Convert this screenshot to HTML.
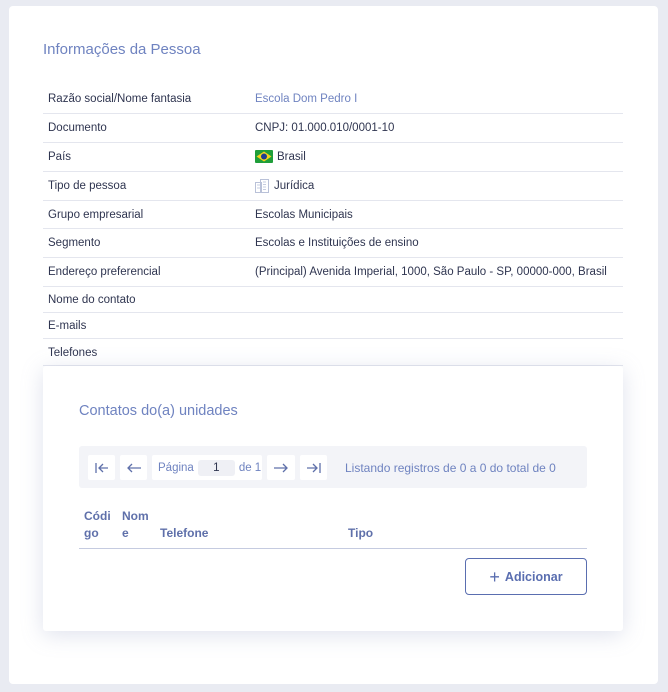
<!DOCTYPE html>
<html><head><meta charset="utf-8"><style>
*{margin:0;padding:0;box-sizing:border-box}
body{width:668px;height:692px;background:#e9ebf2;font-family:"Liberation Sans",sans-serif;position:relative;overflow:hidden}
.outer{position:absolute;left:9px;top:6px;width:649px;height:678px;background:#fff;border-radius:4px}
.title{position:absolute;left:43px;top:41px;font-size:15px;color:#6f83c0}
.row{position:absolute;left:43px;width:580px;border-bottom:1px solid #e4e6ee;font-size:11.5px;color:#2f3550}
.row .l{position:absolute;left:5px;top:3px}
.row .v{position:absolute;left:212px;top:3px;display:flex;align-items:center;gap:4px}
.inner{position:absolute;left:43px;top:366px;width:580px;height:265px;background:#fff;border-radius:3px;box-shadow:0 4px 22px rgba(140,150,190,.28)}
.it{position:absolute;left:36px;top:37px;font-size:14.5px;color:#6f83c0}
.pager{position:absolute;left:36px;top:80px;width:508px;height:42px;background:#f3f4f8;border-radius:3px}
.b{position:absolute;top:9px;height:25px;background:#fff;border-radius:2px;display:flex;align-items:center;justify-content:center}
.hd{position:absolute;top:142px;font-size:12px;font-weight:bold;color:#5f70aa;line-height:17px}
.add{position:absolute;left:422px;top:192px;width:122px;height:37px;border:1px solid #5a6eb0;border-radius:4px;color:#5a6eb0;font-weight:bold;font-size:12.5px;display:flex;align-items:center;justify-content:center}
</style></head><body>
<div class="outer"></div>
<div class="title">Informações da Pessoa</div>

<div class="row" style="top:90px;height:24px"><span class="l">Razão social/Nome fantasia</span><span class="v" style="color:#6f83c0">Escola Dom Pedro I</span></div>
<div class="row" style="top:119px;height:24px"><span class="l">Documento</span><span class="v">CNPJ: 01.000.010/0001-10</span></div>
<div class="row" style="top:148px;height:24px"><span class="l">País</span><span class="v" style="top:2px"><svg width="18" height="13"><rect width="18" height="13" rx="1" fill="#1f9e3a"/><polygon points="9,1.5 16.5,6.5 9,11.5 1.5,6.5" fill="#f5d21c"/><circle cx="9" cy="6.5" r="3" fill="#1f3f8f"/></svg>Brasil</span></div>
<div class="row" style="top:177px;height:24px"><span class="l">Tipo de pessoa</span><span class="v" style="top:2px"><svg width="15" height="14"><rect x="0.5" y="3.5" width="6" height="10" fill="none" stroke="#b9c1d8"/><rect x="5.5" y="0.5" width="8" height="13" fill="none" stroke="#b9c1d8"/><path d="M8 3h3M8 5.5h3M8 8h3M8 10.5h3M2 6h3M2 9h3" stroke="#c6cde0"/></svg>Jurídica</span></div>
<div class="row" style="top:206px;height:23px"><span class="l">Grupo empresarial</span><span class="v">Escolas Municipais</span></div>
<div class="row" style="top:234px;height:24px"><span class="l">Segmento</span><span class="v">Escolas e Instituições de ensino</span></div>
<div class="row" style="top:263px;height:24px"><span class="l">Endereço preferencial</span><span class="v">(Principal) Avenida Imperial, 1000, São Paulo - SP, 00000-000, Brasil</span></div>
<div class="row" style="top:291px;height:22px"><span class="l">Nome do contato</span></div>
<div class="row" style="top:317px;height:22px"><span class="l">E-mails</span></div>
<div class="row" style="top:344px;height:22px"><span class="l">Telefones</span></div>

<div class="inner">
<div class="it">Contatos do(a) unidades</div>
<div class="pager">
 <div class="b" style="left:9px;width:27px"><svg width="16" height="12"><path d="M2 1v10M14 6H5M9 2L5 6l4 4" fill="none" stroke="#5f70aa" stroke-width="1.3"/></svg></div>
 <div class="b" style="left:41px;width:27px"><svg width="16" height="12"><path d="M15 6H2M6 2L2 6l4 4" fill="none" stroke="#5f70aa" stroke-width="1.3"/></svg></div>
 <div class="b" style="left:73px;width:110px;justify-content:flex-start;padding-left:6px;font-size:11.5px;color:#6f83c0">Página<span style="display:inline-block;width:37px;height:16px;background:#eff0f5;border-radius:3px;margin:0 4px;text-align:center;color:#2f3550;line-height:16px">1</span>de 1</div>
 <div class="b" style="left:188px;width:28px"><svg width="16" height="12"><path d="M1 6h13M10 2l4 4-4 4" fill="none" stroke="#5f70aa" stroke-width="1.3"/></svg></div>
 <div class="b" style="left:221px;width:27px"><svg width="16" height="12"><path d="M14 1v10M1 6h10M7 2l4 4-4 4" fill="none" stroke="#5f70aa" stroke-width="1.3"/></svg></div>
 <div style="position:absolute;left:266px;top:15px;font-size:12px;color:#6f83c0">Listando registros de 0 a 0 do total de 0</div>
</div>
<div class="hd" style="left:41px">Códi<br>go</div>
<div class="hd" style="left:79px">Nom<br>e</div>
<div class="hd" style="left:117px;top:159px">Telefone</div>
<div class="hd" style="left:305px;top:159px">Tipo</div>
<div style="position:absolute;left:36px;top:182px;width:508px;border-top:1px solid #c5cbe0"></div>
<div class="add"><span style="font-size:18px;font-weight:normal;margin-right:5px;line-height:12px">+</span>Adicionar</div>
</div>
</body></html>
